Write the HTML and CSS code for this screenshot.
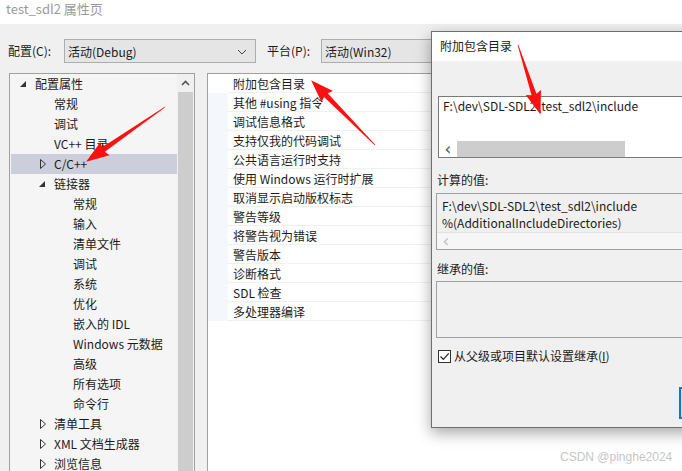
FILE: index.html
```html
<!DOCTYPE html>
<html>
<head>
<meta charset="utf-8">
<link rel="stylesheet" href="styles.css">
</head>
<body>
<div class="page">
  <div class="titlebar">test_sdl2 属性页</div>
  <div class="main">
    <div class="toolbar">
      <span class="lbl">配置(C):</span>
      <div class="select sel1"><span>活动(Debug)</span>
        <svg class="chev" width="10" height="6" viewBox="0 0 10 6"><path d="M1 1 L5 5 L9 1" fill="none" stroke="#444" stroke-width="1"/></svg>
      </div>
      <span class="lbl lbl2">平台(P):</span>
      <div class="select sel2"><span>活动(Win32)</span></div>
    </div>
    <div class="panes">
      <div class="tree">
        <div class="tree-rows">
          <div class="row l0"><span class="tw"><svg width="18" height="20"><polygon points="9,7 9,13 3,13" fill="#333"/></svg></span>配置属性</div>
          <div class="row l1"><span class="tw"></span>常规</div>
          <div class="row l1"><span class="tw"></span>调试</div>
          <div class="row l1"><span class="tw"></span>VC++ 目录</div>
          <div class="row l1 sel"><span class="tw"><svg width="18" height="20"><polygon points="4.5,5.5 9.5,10 4.5,14.5" fill="none" stroke="#333"/></svg></span>C/C++</div>
          <div class="row l1"><span class="tw"><svg width="18" height="20"><polygon points="9,7 9,13 3,13" fill="#333"/></svg></span>链接器</div>
          <div class="row l2"><span class="tw"></span>常规</div>
          <div class="row l2"><span class="tw"></span>输入</div>
          <div class="row l2"><span class="tw"></span>清单文件</div>
          <div class="row l2"><span class="tw"></span>调试</div>
          <div class="row l2"><span class="tw"></span>系统</div>
          <div class="row l2"><span class="tw"></span>优化</div>
          <div class="row l2"><span class="tw"></span>嵌入的 IDL</div>
          <div class="row l2"><span class="tw"></span>Windows 元数据</div>
          <div class="row l2"><span class="tw"></span>高级</div>
          <div class="row l2"><span class="tw"></span>所有选项</div>
          <div class="row l2"><span class="tw"></span>命令行</div>
          <div class="row l1"><span class="tw"><svg width="18" height="20"><polygon points="4.5,5.5 9.5,10 4.5,14.5" fill="none" stroke="#333"/></svg></span>清单工具</div>
          <div class="row l1"><span class="tw"><svg width="18" height="20"><polygon points="4.5,5.5 9.5,10 4.5,14.5" fill="none" stroke="#333"/></svg></span>XML 文档生成器</div>
          <div class="row l1"><span class="tw"><svg width="18" height="20"><polygon points="4.5,5.5 9.5,10 4.5,14.5" fill="none" stroke="#333"/></svg></span>浏览信息</div>
        </div>
        <div class="vscroll">
          <div class="vup"><svg width="9" height="6" viewBox="0 0 9 6"><path d="M1 5 L4.5 1.5 L8 5" fill="none" stroke="#555" stroke-width="1.6"/></svg></div>
          <div class="vthumb"></div>
        </div>
      </div>
      <div class="props">
        <div class="prow first"><span class="strip"></span><span class="pname">附加包含目录</span></div>
        <div class="prow"><span class="strip"></span><span class="pname">其他 #using 指令</span></div>
        <div class="prow"><span class="strip"></span><span class="pname">调试信息格式</span></div>
        <div class="prow"><span class="strip"></span><span class="pname">支持仅我的代码调试</span></div>
        <div class="prow"><span class="strip"></span><span class="pname">公共语言运行时支持</span></div>
        <div class="prow"><span class="strip"></span><span class="pname">使用 Windows 运行时扩展</span></div>
        <div class="prow"><span class="strip"></span><span class="pname">取消显示启动版权标志</span></div>
        <div class="prow"><span class="strip"></span><span class="pname">警告等级</span></div>
        <div class="prow"><span class="strip"></span><span class="pname">将警告视为错误</span></div>
        <div class="prow"><span class="strip"></span><span class="pname">警告版本</span></div>
        <div class="prow"><span class="strip"></span><span class="pname">诊断格式</span></div>
        <div class="prow"><span class="strip"></span><span class="pname">SDL 检查</span></div>
        <div class="prow"><span class="strip"></span><span class="pname">多处理器编译</span></div>
      </div>
    </div>
  </div>

  <div class="dialog">
    <div class="dtitle">附加包含目录</div>
    <div class="dbody">
      <div class="edit">
        <div class="etext">F:\dev\SDL-SDL2\test_sdl2\include</div>
        <div class="hscroll">
          <span class="harrow">&lsaquo;</span>
          <span class="hthumb"></span>
        </div>
      </div>
      <div class="dlabel">计算的值:</div>
      <div class="rbox">
        <div class="rtext">F:\dev\SDL-SDL2\test_sdl2\include<br>%(AdditionalIncludeDirectories)</div>
        <div class="hscroll dis"><span class="harrow">&lsaquo;</span></div>
      </div>
      <div class="dlabel">继承的值:</div>
      <div class="rbox"></div>
      <div class="check">
        <span class="cbox"><svg width="11" height="11" viewBox="0 0 11 11"><path d="M1.5 5.5 L4.3 8.3 L9.8 2.3" fill="none" stroke="#222" stroke-width="1.2"/></svg></span>
        <span>从父级或项目默认设置继承(<u>I</u>)</span>
      </div>
      <div class="btnrow"><span class="btn"></span></div>
    </div>
  </div>

  <div class="watermark">CSDN @pinghe2024</div>

  <svg class="arrows" width="682" height="471" viewBox="0 0 682 471">
    <g fill="#ff1010">
      <polygon transform="translate(165,107) rotate(145.3)" points="0,-0.4 75,-2.6 73,-8 96,0 73,8 75,2.6 0,0.4"/>
      <polygon transform="translate(375,145) rotate(-134.6)" points="0,-0.4 70,-2.6 68,-8 91,0 68,8 70,2.6 0,0.4"/>
      <polygon transform="translate(518,45) rotate(72.1)" points="0,-0.4 52,-2.6 50,-8 73,0 50,8 52,2.6 0,0.4"/>
    </g>
  </svg>
</div>
</body>
</html>
```

FILE: styles.css
```css
* { box-sizing: border-box; }
html, body { margin: 0; padding: 0; }
body {
  width: 682px;
  height: 471px;
  overflow: hidden;
  font-family: "Noto Sans CJK SC", "Noto Sans", sans-serif;
  font-size: 12px;
  color: #1b1b1b;
  background: #ffffff;
}
.page {
  position: relative;
  width: 682px;
  height: 471px;
  display: flex;
  flex-direction: column;
  overflow: hidden;
}
.titlebar {
  height: 24px;
  line-height: 18px;
  padding-left: 6px;
  font-size: 13px;
  color: #9a9a9a;
  background: #ffffff;
  flex: none;
}
.main {
  flex: 1;
  background: #f0f0f0;
  display: flex;
  flex-direction: column;
  min-height: 0;
}
.toolbar {
  display: flex;
  align-items: center;
  padding-top: 15px;
  padding-left: 8px;
  height: 39px;
  flex: none;
}
.lbl { width: 56px; line-height: 24px; }
.lbl2 { width: 54px; margin-left: 11px; }
.select {
  height: 24px;
  border: 1px solid #adadad;
  background: #e5e5e5;
  display: flex;
  align-items: center;
  padding-left: 3px;
  position: relative;
}
.sel1 { width: 192px; }
.sel1 .chev { position: absolute; right: 8px; top: 9px; }
.sel2 { width: 200px; }
.panes {
  flex: 1;
  display: flex;
  margin-top: 10px;
  padding-left: 9px;
  min-height: 0;
}
.tree {
  width: 186px;
  border: 1px solid #a0a0a0;
  border-bottom: none;
  background: #f5f5f5;
  display: flex;
}
.tree-rows { flex: 1; }
.row {
  height: 20px;
  line-height: 20px;
  display: flex;
  white-space: nowrap;
}
.row.l0 { padding-left: 7px; }
.row.l1 { padding-left: 26px; }
.row.l2 { padding-left: 45px; }
.row.sel { background: #cccedb; margin-left: 1px; padding-left: 25px; }
.tw { width: 18px; height: 20px; flex: none; display: block; }
.tw svg { display: block; }
.vscroll {
  width: 17px;
  background: #f0f0f0;
  display: flex;
  flex-direction: column;
}
.vup {
  height: 18px;
  display: flex;
  align-items: center;
  justify-content: center;
}
.vthumb {
  flex: 1;
  margin: 0 1px;
  background: #cdcdcd;
}
.props {
  flex: 1;
  margin-left: 12px;
  border: 1px solid #a0a0a0;
  border-bottom: none;
  border-right: none;
  background: #ffffff;
}
.prow {
  height: 19px;
  display: flex;
  line-height: 19px;
  border-bottom: 1px solid #f0f0f0;
}
.strip {
  width: 20px;
  flex: none;
  background: #f4f7fc;
  margin-bottom: -1px;
}
.prow.first .strip { background: #ffffff; }
.pname { padding-left: 5px; white-space: nowrap; }

.dialog {
  position: absolute;
  left: 431px;
  top: 31px;
  width: 280px;
  height: 397px;
  border: 1px solid #6f6f6f;
  background: #f0f0f0;
  box-shadow: 0 5px 14px rgba(0,0,0,0.35);
  display: flex;
  flex-direction: column;
}
.dtitle {
  height: 29px;
  line-height: 28px;
  padding-left: 8px;
  background: #ffffff;
  flex: none;
}
.dbody {
  padding-left: 4px;
  display: flex;
  flex-direction: column;
}
.edit {
  margin-top: 35px;
  margin-left: 2px;
  width: 300px;
  height: 62px;
  border: 1px solid #7a7a7a;
  background: #ffffff;
  display: flex;
  flex-direction: column;
}
.etext { padding: 0 0 0 4px; line-height: 17px; }
.hscroll {
  margin-top: auto;
  height: 16px;
  display: flex;
  align-items: center;
  background: #ffffff;
}
.harrow {
  width: 18px;
  text-align: center;
  font-size: 17px;
  line-height: 14px;
  color: #555;
  font-family: "DejaVu Sans", sans-serif;
}
.hthumb {
  width: 168px;
  height: 16px;
  background: #cdcdcd;
}
.dlabel {
  height: 16px;
  line-height: 16px;
  padding-left: 1px;
  margin-top: 14px;
  margin-bottom: 5px;
}
.rbox {
  width: 300px;
  height: 57px;
  border: 1px solid #a0a0a0;
  background: #f0f0f0;
  display: flex;
  flex-direction: column;
}
.rtext { padding: 3px 0 0 5px; line-height: 17px; }
.hscroll.dis {
  background: #f6f6f6;
  border-top: 1px solid #e2e2e2;
  height: 17px;
}
.hscroll.dis .harrow { color: #c0c0c0; }
.rbox + .dlabel { margin-top: 11px; margin-bottom: 4px; }
.check {
  margin-top: 11px;
  height: 14px;
  display: flex;
  align-items: center;
  padding-left: 2px;
  line-height: 14px;
}
.cbox {
  width: 13px;
  height: 13px;
  border: 1px solid #333;
  background: #ffffff;
  margin-right: 3px;
  display: flex;
  align-items: center;
  justify-content: center;
}
.check u { text-decoration: underline; }
.btnrow {
  margin-top: 24px;
  padding-left: 243px;
}
.btn {
  display: block;
  width: 80px;
  height: 32px;
  border: 2px solid #0078d7;
  background: #e1e1e1;
}
.watermark {
  position: absolute;
  left: 560px;
  top: 449px;
  font-size: 12px;
  line-height: 16px;
  color: #c6c6c6;
  font-family: "Liberation Sans", sans-serif;
}
.arrows {
  position: absolute;
  left: 0;
  top: 0;
  pointer-events: none;
}
```
